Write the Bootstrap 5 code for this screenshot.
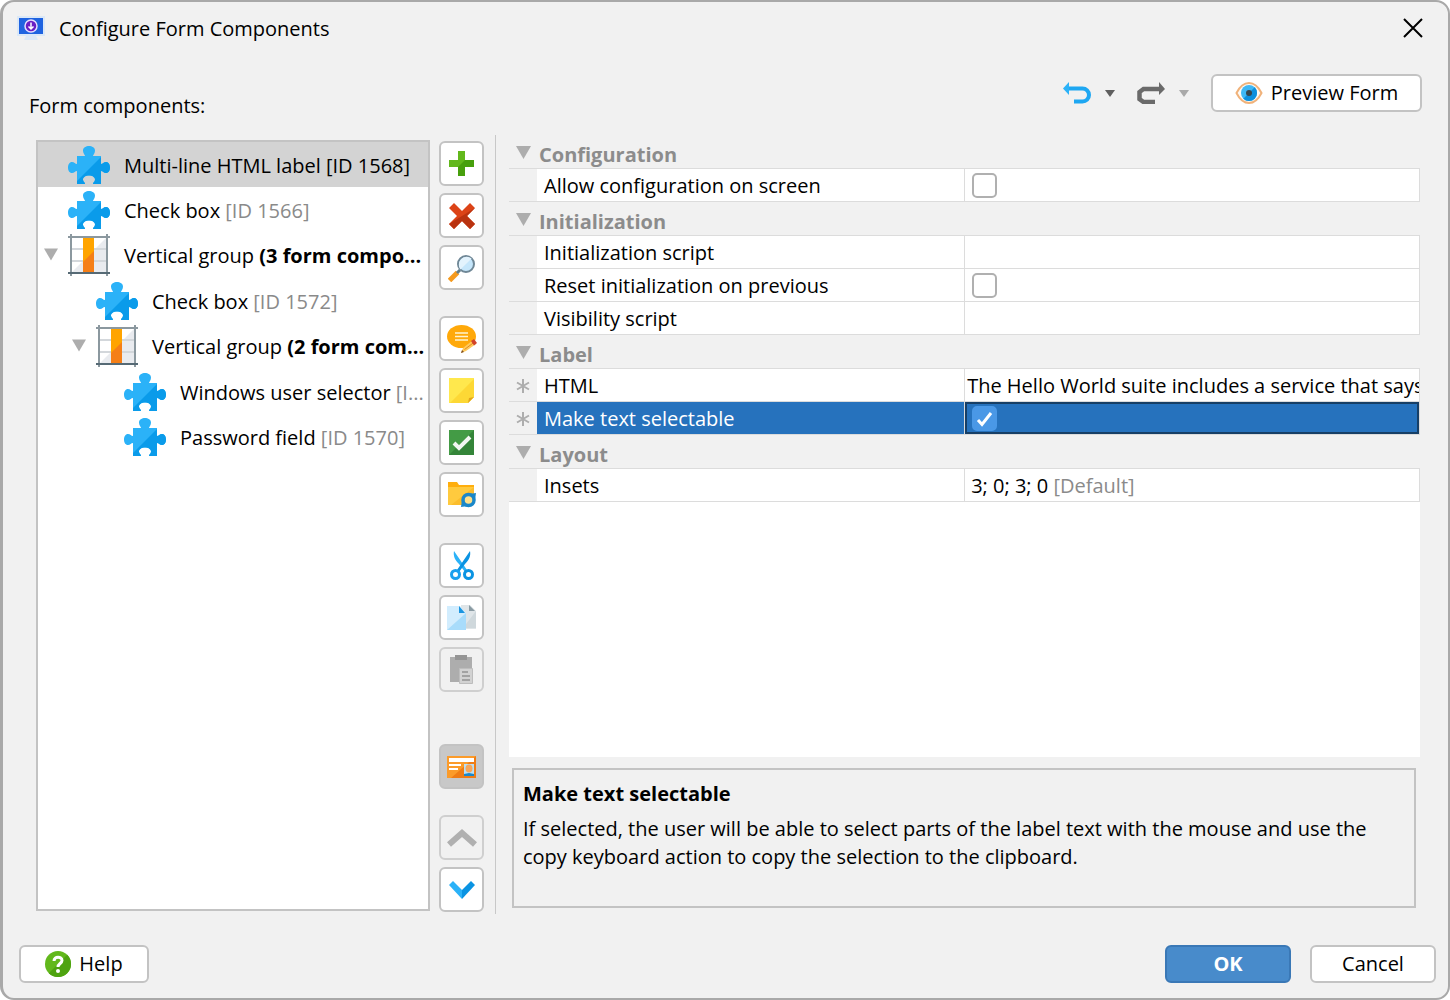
<!DOCTYPE html>
<html lang="en">
<head>
<meta charset="utf-8">
<meta name="viewport" content="width=device-width, initial-scale=1">
<title>Configure Form Components</title>
<link href="https://cdn.jsdelivr.net/npm/bootstrap@5.3.0/dist/css/bootstrap.min.css" rel="stylesheet">
<style>
  body { font-family: "Open Sans", "Noto Sans", sans-serif; font-size: 20px; line-height: 28px; color: #000; background: #fff; }
  svg { display: block; flex: none; }
  .dlg { min-height: 100vh; background: #f1f1f1; border: 2px solid #a9a9a9; border-left-width: 3px; border-radius: 14px; }
  .dlg-title { height: 54px; padding: 0 25px 2px 14px; gap: 14px; }
  .dlg-title h1 { font-size: 20px; line-height: 28px; font-weight: 400; padding-top: 2px; }
  .plain-btn { background: none; border: 0; padding: 0; }
  .dlg-head { height: 79px; padding: 18px 26px 0; }
  .dlg-head h2 { font-size: 20px; line-height: 28px; font-weight: 400; margin: 18px 0 0; }
  .hist { height: 38px; gap: 14px; margin-right: 22px; }
  .ui-btn { height: 38px; padding: 0; font-size: 20px; line-height: 28px; color: #000; background: #fff; border: 2px solid #c3c3c3; border-radius: 6px; }
  .ui-btn.ok { color: #fff; font-weight: 700; background: #488bcb; border-color: #3a78b6; }
  .w-preview { width: 211px; }
  .w-help { width: 130px; }
  .w-act { width: 126px; }
  .dlg-main { padding-left: 33px; min-height: 0; }
  .tree-pane { width: 394px; margin: 5px 9px 3px 0; background: #fff; border: 2px solid #c3c3c3; }
  .tree-pane ul ul { padding-left: 28px; margin-top: 1px; }
  .tree-row { height: 45px; padding-left: 6px; white-space: nowrap; }
  .tree-row .tw { width: 14px; margin-right: 10px; }
  .tree-row .ic { width: 42px; margin-right: 14px; }
  .tree-row .tx { padding-top: 3px; }
  .tree-row.picked { background: #d3d3d3; }
  .id-note { color: #8a8a8a; }
  .picked .id-note { color: #000; }
  .tool-col { width: 45px; margin-right: 11px; padding-top: 6px; }
  .tool-set { gap: 7px; margin-bottom: 26px; }
  .tool-set.far { margin-bottom: 52px; }
  .tool-btn { width: 45px; height: 45px; padding: 0; background: #fff; border: 2px solid #c3c3c3; border-radius: 6px; }
  .tool-btn:disabled { background: #f1f1f1; border-color: #cfcfcf; opacity: 1; }
  .tool-btn.on { background: #c8c8c8; }
  .prop-col { min-width: 0; border-left: 1px solid #c8c8c8; padding: 0 28px 6px 13px; }
  .prop-pane { background: #fff; }
  .prop-grid { table-layout: fixed; border-collapse: separate; border-spacing: 0; }
  .prop-grid td, .prop-grid th { height: 33px; padding: 2px 0 0; border: 0 solid #dcdcdc; border-bottom-width: 1px; white-space: nowrap; overflow: hidden; }
  .prop-grid .sec th { height: 34px; background: #f1f1f1; color: #8c8c8c; padding: 5px 0 0 7px; line-height: 28px; }
  .prop-grid .sec svg { margin: 0 8px 4px 0; }
  .prop-grid .sec span { height: 26px; }
  .prop-grid .mk { background: #f1f1f1; padding-left: 7px; }
  .prop-grid .nm { padding-left: 7px; border-right-width: 1px; }
  .prop-grid .vl { padding-left: 6px; border-right-width: 1px; }
  .prop-grid .vl.snug { padding-left: 2px; }
  .prop-grid .vl.tick { padding-top: 0; }
  .prop-grid .pickrow .nm { background: #2672bd; color: #fff; }
  .prop-grid .pickrow .vl { background: #2672bd; box-shadow: inset 0 0 0 2px #173f66; }
  .prop-grid .form-check-input { display: block; float: none; width: 25px; height: 25px; margin: 0 0 0 1px; border: 2px solid #b0b0b0; border-radius: 5px; }
  .prop-grid .form-check-input:checked { background-color: #4a98e6; border-color: #4a98e6; background-image: none; }
  .tick-wrap { width: 26px; }
  .tick-mark { position: absolute; left: 5px; top: 5px; pointer-events: none; }
  .help-box { height: 140px; margin: 11px 4px 0 3px; padding: 10px 9px; border: 2px solid #c3c3c3; }
  .help-box h3 { font-size: 20px; line-height: 28px; font-weight: 700; margin: 0 0 7px; }
  .dlg-foot { padding: 31px 12px 15px 16px; gap: 19px; }
</style>
</head>
<body>
<svg width="0" height="0" class="position-absolute" aria-hidden="true">
  <defs>
    <symbol id="puzzle" viewBox="0 0 42 38">
      <path fill="#2bb2f8" d="M9 10h8c0-1.500-2-2.500-2-5.300C15 1.500 18 0 21 0s6 1.500 6 4.700C27 7.500 25 8.500 25 10h8v8c2 0 2.500-2 5-2 2.600 0 4 2.500 4 5.500s-1.400 5.500-4 5.500c-2.500 0-3-2-5-2v13h-8c0-2 2-2 2-4.500 0-2.500-3-4-6-4s-6 1.500-6 4c0 2.500 2 2.500 2 4.500H9V25c-2 0-2.500 2-5 2-2.600 0-4-2.500-4-5.500S1.400 16 4 16c2.500 0 3 2 5 2z"/>
      <path fill="#0a9bea" d="M33 11v7c2 0 2.500-2 5-2 2.600 0 4 2.500 4 5.500s-1.400 5.500-4 5.500c-2.500 0-3-2-5-2v13h-8c0-2 2-2 2-4.500 0-2.500-3-4-6-4s-6 1.500-6 4c0 2.500 2 2.500 2 4.500H9V35z"/>
    </symbol>
    <symbol id="vgroup" viewBox="0 0 42 42">
      <path fill="#fff" d="M3 3h36v36H3z"/>
      <path fill="#e9ebef" d="M39 3v36H3z"/>
      <path stroke="#d3d7db" d="M3 15h36M3 27h36" stroke-width="2"/>
      <path fill="#ffa400" d="M15 3h11v35H15z"/>
      <path fill="#f57f17" d="M26 17v21H15V28z"/>
      <path stroke="#8b989f" stroke-width="2" d="M0 3h42M3 0v42M39 0v42"/>
      <path stroke="#566a75" stroke-width="2" d="M0 39h42"/>
    </symbol>
    <symbol id="tri" viewBox="0 0 15 13"><path fill="#adadad" d="M0 0h15L7.500 13z"/></symbol>
    <symbol id="star" viewBox="0 0 14 14"><path stroke="#adadad" stroke-width="2" fill="none" d="M7 0v14M1 3.500l12 7M13 3.500l-12 7"/></symbol>
  </defs>
</svg>

<div class="dlg d-flex flex-column">
  <header class="dlg-title d-flex align-items-center">
    <svg width="28" height="28" viewBox="0 0 28 28"><path fill="#dbe8f7" d="M0 2h28v20H0zM9 22h10l2 4H7z"/><path fill="#1f63e0" d="M2 4h24v16H2z"/><circle cx="14" cy="12" r="6" fill="#6a1fc4" stroke="#e6ddff" stroke-width="1.500"/><path d="M14 8.500v6M11.500 12.500L14 15l2.500-2.500" stroke="#fff" stroke-width="1.500" fill="none"/></svg>
    <h1 class="m-0 flex-fill">Configure Form Components</h1>
    <button class="plain-btn" type="button" aria-label="Close"><svg width="20" height="20" viewBox="0 0 20 20"><path d="M1 1l18 18M19 1L1 19" stroke="#000" stroke-width="2"/></svg></button>
  </header>

  <div class="dlg-head d-flex align-items-start">
    <h2 class="me-auto">Form components:</h2>
    <div class="hist d-flex align-items-center">
      <button class="plain-btn" type="button" aria-label="Undo"><svg width="28" height="22" viewBox="0 0 28 22"><path d="M6 6.500h13.500a6.500 6.500 0 0 1 0 13H11" fill="none" stroke="#1ea7f2" stroke-width="4"/><path fill="#2bb2f8" d="M0 6.500L6 0v13z"/></svg></button>
      <button class="plain-btn me-2" type="button" aria-label="Undo history"><svg width="10" height="7" viewBox="0 0 10 7"><path fill="#5f5f5f" d="M0 0h10L5 7z"/></svg></button>
      <button class="plain-btn" type="button" aria-label="Redo"><svg width="28" height="22" viewBox="0 0 28 22"><path d="M22 7H6.500L2.500 10v7L6.500 20H18" fill="none" stroke="#6a6a6a" stroke-width="4.500"/><path fill="#6a6a6a" d="M28 7l-6-7v13z"/></svg></button>
      <button class="plain-btn" type="button" aria-label="Redo history"><svg width="10" height="7" viewBox="0 0 10 7"><path fill="#a9a9a9" d="M0 0h10L5 7z"/></svg></button>
    </div>
    <button class="ui-btn w-preview d-flex align-items-center justify-content-center gap-2" type="button">
      <svg width="28" height="24" viewBox="0 0 28 24"><path d="M1.500 12C5 5 9.500 2 14 2s9 3 12.500 10C23 19 18.500 22 14 22S5 19 1.500 12z" fill="#fdfaf5" stroke="#f0b27a" stroke-width="2"/><circle cx="14" cy="12" r="8" fill="#3fb8f5"/><path fill="#0d8fdd" d="M19.700 6.300a8 8 0 0 1-11.400 11.400z"/><circle cx="14" cy="12" r="3" fill="#37474f"/></svg>
      Preview Form</button>
  </div>

  <main class="dlg-main d-flex flex-fill">
    <nav class="tree-pane flex-shrink-0" aria-label="Form components">
      <ul class="list-unstyled mb-0">
        <li><div class="tree-row picked d-flex align-items-center"><span class="tw"></span><svg class="ic" height="38"><use href="#puzzle"/></svg><span class="tx">Multi-line HTML label <span class="id-note">[ID 1568]</span></span></div></li>
        <li><div class="tree-row d-flex align-items-center"><span class="tw"></span><svg class="ic" height="38"><use href="#puzzle"/></svg><span class="tx">Check box <span class="id-note">[ID 1566]</span></span></div></li>
        <li><div class="tree-row d-flex align-items-center"><svg class="tw" height="13"><use href="#tri"/></svg><svg class="ic" height="42"><use href="#vgroup"/></svg><span class="tx">Vertical group <b>(3 form compo...</b></span></div>
          <ul class="list-unstyled">
            <li><div class="tree-row d-flex align-items-center"><span class="tw"></span><svg class="ic" height="38"><use href="#puzzle"/></svg><span class="tx">Check box <span class="id-note">[ID 1572]</span></span></div></li>
            <li><div class="tree-row d-flex align-items-center"><svg class="tw" height="13"><use href="#tri"/></svg><svg class="ic" height="42"><use href="#vgroup"/></svg><span class="tx">Vertical group <b>(2 form com...</b></span></div>
              <ul class="list-unstyled">
                <li><div class="tree-row d-flex align-items-center"><span class="tw"></span><svg class="ic" height="38"><use href="#puzzle"/></svg><span class="tx">Windows user selector <span class="id-note">[I...</span></span></div></li>
                <li><div class="tree-row d-flex align-items-center"><span class="tw"></span><svg class="ic" height="38"><use href="#puzzle"/></svg><span class="tx">Password field <span class="id-note">[ID 1570]</span></span></div></li>
              </ul>
            </li>
          </ul>
        </li>
      </ul>
    </nav>

    <div class="tool-col flex-shrink-0" role="toolbar" aria-label="Component actions">
      <div class="tool-set d-flex flex-column">
        <button class="tool-btn d-flex align-items-center justify-content-center" type="button" aria-label="Add"><svg width="25" height="25" viewBox="0 0 25 25"><path fill="#62b81c" d="M9 0h7v9h9v7h-9v9H9v-9H0V9h9z"/><path fill="#479f0d" d="M16 9h9v7h-9v9H9v-9z"/></svg></button>
        <button class="tool-btn d-flex align-items-center justify-content-center" type="button" aria-label="Remove"><svg width="26" height="26" viewBox="0 0 26 26"><path fill="#dc4317" d="M5 0l8 8 8-8 5 5-8 8 8 8-5 5-8-8-8 8-5-5 8-8-8-8z"/><path fill="#b93310" d="M26 5l-8 8 8 8-5 5-8-8-8 8-5-5z"/></svg></button>
        <button class="tool-btn d-flex align-items-center justify-content-center" type="button" aria-label="Search"><svg width="28" height="28" viewBox="0 0 28 28"><path d="M1.500 26.500L9.500 18.500" stroke="#f59a1d" stroke-width="5"/><path d="M9 19l3-3" stroke="#607d8b" stroke-width="3"/><circle cx="18" cy="10" r="8" fill="#c5e6fb" stroke="#6f8796" stroke-width="2"/><path fill="#e3f3fd" d="M12.400 15.600a8 8 0 0 1 11.200-11.200z"/></svg></button>
      </div>
      <div class="tool-set d-flex flex-column">
        <button class="tool-btn d-flex align-items-center justify-content-center" type="button" aria-label="Comment"><svg width="30" height="28" viewBox="0 0 30 28"><ellipse cx="14.500" cy="11.500" rx="14.500" ry="11.500" fill="#ffa90a"/><path stroke="#fff3cf" stroke-width="1.500" d="M8 8h13M8 11.500h13M8 15h13"/><path fill="#ffca5c" d="M14 28l2-5 10-8 3 4-10 7z"/><path stroke="#e58a1c" d="M17.500 24.500L27.500 17"/><path fill="#d2422a" d="M24 16l3-2 3 4-3 2.500z"/><path fill="#7a4b20" d="M14 28l1-3 2 2z"/></svg></button>
        <button class="tool-btn d-flex align-items-center justify-content-center" type="button" aria-label="Note"><svg width="25" height="25" viewBox="0 0 25 25"><path fill="#ffe84d" d="M0 0h25v19l-6 6H0z"/><path fill="#fdd835" d="M25 1v18l-6 6H1z"/><path fill="#e2a51c" d="M25 19l-6 6 1-5z"/></svg></button>
        <button class="tool-btn d-flex align-items-center justify-content-center" type="button" aria-label="Validate"><svg width="25" height="25" viewBox="0 0 25 25"><path fill="#439b45" d="M0 0h25v25H0z"/><path fill="#348539" d="M25 0v25H0z"/><path d="M5 13l5 5L21 7" fill="none" stroke="#f2f7f2" stroke-width="4"/></svg></button>
        <button class="tool-btn d-flex align-items-center justify-content-center" type="button" aria-label="Link folder"><svg width="28" height="26" viewBox="0 0 28 26"><path fill="#ffae0d" d="M0 0h9l2 3h15v6H0z"/><path fill="#ffca3e" d="M0 5h26v18H0z"/><path fill="#fbbd2c" d="M26 5v18H3z"/><circle cx="20.500" cy="18" r="5.500" fill="#ffe08a" stroke="#1a87c9" stroke-width="3.500"/><path d="M13 25l1-7 6 6zM28 11l-1 7-6-6z" fill="#1a87c9"/></svg></button>
      </div>
      <div class="tool-set far d-flex flex-column">
        <button class="tool-btn d-flex align-items-center justify-content-center" type="button" aria-label="Cut"><svg width="24" height="30" viewBox="0 0 24 30"><path fill="#2bb2f8" d="M4 0c-1 5 1 9 5 13l6 8 2-2z"/><path fill="#0a93e2" d="M20 0c1 5-1 9-5 13l-6 8-2-2z"/><circle cx="5.500" cy="23.500" r="4" fill="none" stroke="#1ba0ee" stroke-width="3"/><circle cx="18.500" cy="23.500" r="4" fill="none" stroke="#0a93e2" stroke-width="3"/></svg></button>
        <button class="tool-btn d-flex align-items-center justify-content-center" type="button" aria-label="Copy"><svg width="30" height="26" viewBox="0 0 30 26"><path fill="#dfe5e8" d="M14 0h9l6 6v18H14z"/><path fill="#cfd8dc" d="M29 6v17H16z"/><path fill="#8a9ba3" d="M22 0l6 6h-6z"/><path fill="#d2edfe" d="M0 1h13l6 7v17H0z"/><path fill="#a8dcfb" d="M19 8v17H0z"/><path fill="#1b95e0" d="M12 1l6 7h-6z"/></svg></button>
        <button class="tool-btn d-flex align-items-center justify-content-center" type="button" aria-label="Paste" disabled><svg width="24" height="29" viewBox="0 0 24 29"><path fill="#adadad" d="M0 2h22v25H0z"/><path fill="#959595" d="M5 0h12v5H5z"/><path fill="#d2d2d2" stroke="#bdbdbd" d="M9.500 13.500h13v15h-13z"/><path stroke="#a2a2a2" stroke-width="2" d="M12 17h6M12 21h8M12 25h8"/></svg></button>
      </div>
      <div class="tool-set d-flex flex-column">
        <button class="tool-btn on d-flex align-items-center justify-content-center" type="button" aria-label="Show details" aria-pressed="true"><svg width="30" height="22" viewBox="0 0 30 22"><path fill="#fb9b2a" d="M0 0h29v22H0z"/><path fill="#ef7c15" d="M29 0v22H4z"/><path fill="#fff" d="M2 2h25v4H2zM2 8h12v2H2zM2 12h9v2H2z"/><path fill="#b8dff5" d="M17 8h10v12H17z"/><ellipse cx="22" cy="12.500" rx="3.500" ry="4" fill="#f5a65b"/><path fill="#1a87c9" d="M17 20v-2l5-1 5 1v2z"/></svg></button>
      </div>
      <div class="tool-set d-flex flex-column mb-0">
        <button class="tool-btn d-flex align-items-center justify-content-center" type="button" aria-label="Move up" disabled><svg width="30" height="20" viewBox="0 0 30 20"><path d="M2 16.500L15 5l13 11.500" fill="none" stroke="#b0b0b0" stroke-width="6"/></svg></button>
        <button class="tool-btn d-flex align-items-center justify-content-center" type="button" aria-label="Move down"><svg width="26" height="18" viewBox="0 0 26 18"><path fill="#2bb2f8" d="M0 4l4-4 9 9v9z"/><path fill="#0a93e2" d="M26 4l-4-4-9 9v9z"/></svg></button>
      </div>
    </div>

    <section class="prop-col d-flex flex-column flex-fill">
      <div class="prop-pane flex-fill">
        <table class="prop-grid w-100">
          <colgroup><col style="width:28px"><col style="width:47%"><col></colgroup>
          <tbody>
            <tr class="sec"><th colspan="3" scope="colgroup"><div class="d-flex align-items-center"><svg width="15" height="13"><use href="#tri"/></svg><span>Configuration</span></div></th></tr>
            <tr><td class="mk"></td><td class="nm"><label for="allow">Allow configuration on screen</label></td><td class="vl tick"><input class="form-check-input" type="checkbox" id="allow"></td></tr>
            <tr class="sec"><th colspan="3" scope="colgroup"><div class="d-flex align-items-center"><svg width="15" height="13"><use href="#tri"/></svg><span>Initialization</span></div></th></tr>
            <tr><td class="mk"></td><td class="nm">Initialization script</td><td class="vl"></td></tr>
            <tr><td class="mk"></td><td class="nm"><label for="reset">Reset initialization on previous</label></td><td class="vl tick"><input class="form-check-input" type="checkbox" id="reset"></td></tr>
            <tr><td class="mk"></td><td class="nm">Visibility script</td><td class="vl"></td></tr>
            <tr class="sec"><th colspan="3" scope="colgroup"><div class="d-flex align-items-center"><svg width="15" height="13"><use href="#tri"/></svg><span>Label</span></div></th></tr>
            <tr><td class="mk"><svg width="14" height="14"><use href="#star"/></svg></td><td class="nm">HTML</td><td class="vl snug">The Hello World suite includes a service that says</td></tr>
            <tr class="pickrow"><td class="mk"><svg width="14" height="14"><use href="#star"/></svg></td><td class="nm"><label for="selectable">Make text selectable</label></td><td class="vl tick"><div class="tick-wrap position-relative"><input class="form-check-input" type="checkbox" id="selectable" checked><svg class="tick-mark" width="17" height="16" viewBox="0 0 17 16"><path d="M2 9l4 4.500L15 2" fill="none" stroke="#fff" stroke-width="3"/></svg></div></td></tr>
            <tr class="sec"><th colspan="3" scope="colgroup"><div class="d-flex align-items-center"><svg width="15" height="13"><use href="#tri"/></svg><span>Layout</span></div></th></tr>
            <tr><td class="mk"></td><td class="nm">Insets</td><td class="vl">3; 0; 3; 0 <span class="id-note">[Default]</span></td></tr>
          </tbody>
        </table>
      </div>
      <div class="help-box">
        <h3>Make text selectable</h3>
        <p class="m-0">If selected, the user will be able to select parts of the label text with the mouse and use the copy keyboard action to copy the selection to the clipboard.</p>
      </div>
    </section>
  </main>

  <footer class="dlg-foot d-flex">
    <button class="ui-btn w-help me-auto d-flex align-items-center justify-content-center gap-2" type="button">
      <svg width="26" height="26" viewBox="0 0 26 26"><circle cx="13" cy="13" r="13" fill="#62b81c"/><path fill="#4ea310" d="M22.200 3.800A13 13 0 0 1 3.800 22.200z"/><path d="M9 10c0-5 8-5 8-.5 0 3-4 3-4 6.500" fill="none" stroke="#fff" stroke-width="3"/><circle cx="13" cy="20" r="2" fill="#fff"/></svg>
      Help</button>
    <button class="ui-btn ok w-act" type="button">OK</button>
    <button class="ui-btn w-act" type="button">Cancel</button>
  </footer>
</div>
<script src="https://cdn.jsdelivr.net/npm/bootstrap@5.3.0/dist/js/bootstrap.bundle.min.js"></script>
</body>
</html>
